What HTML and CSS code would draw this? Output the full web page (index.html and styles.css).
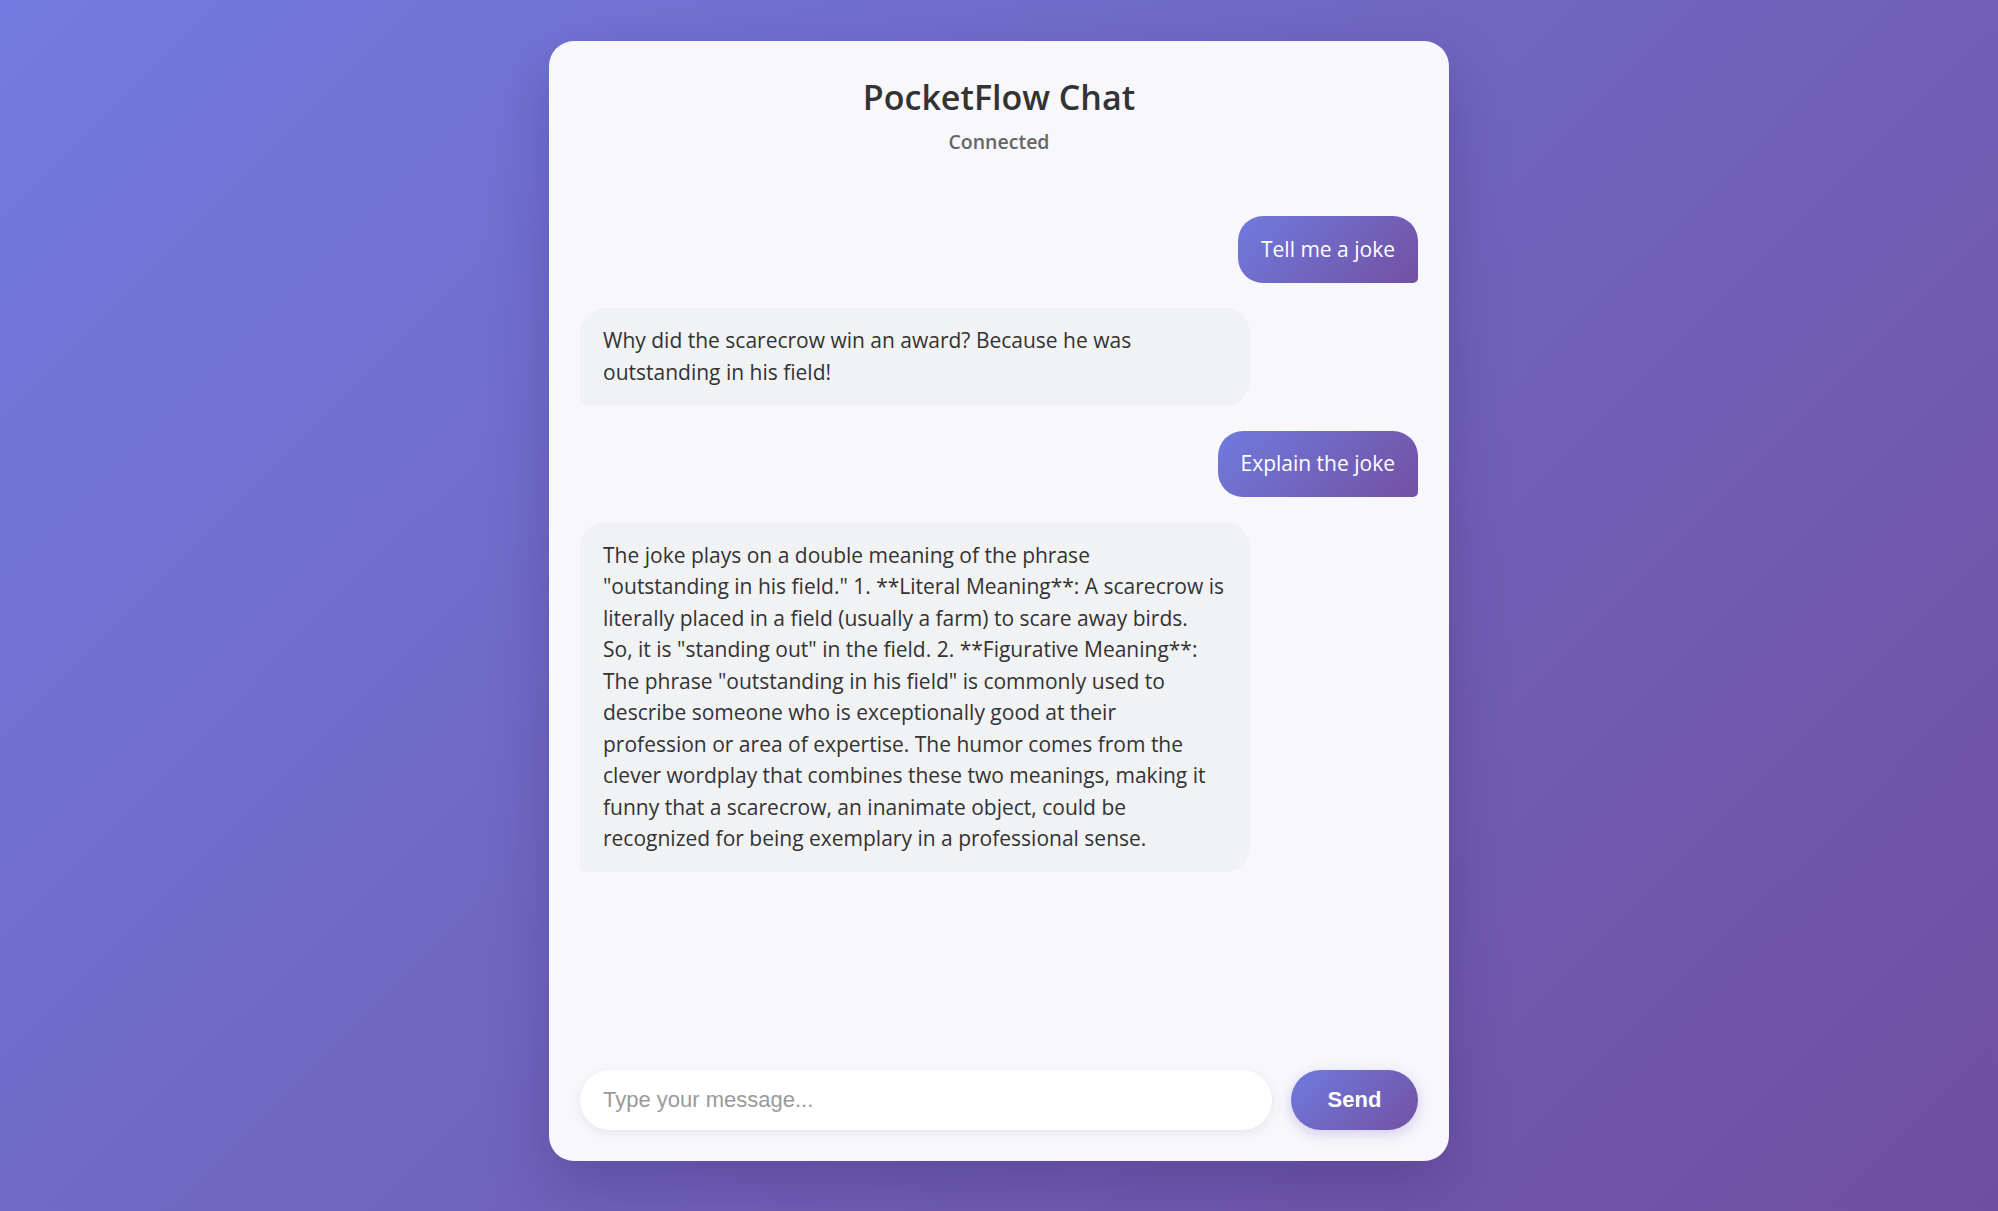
FILE: index.html
```html
<!DOCTYPE html>
<html lang="en">
<head>
<meta charset="utf-8">
<title>PocketFlow Chat</title>
<link rel="stylesheet" href="styles.css">
</head>
<body>
<div class="chat-card">
  <header class="chat-header">
    <h1 class="chat-title">PocketFlow Chat</h1>
    <div class="chat-status">Connected</div>
  </header>
  <div class="messages">
    <div class="msg msg-user">Tell me a joke</div>
    <div class="msg msg-bot">Why did the scarecrow win an award? Because he was outstanding in his field!</div>
    <div class="msg msg-user">Explain the joke</div>
    <div class="msg msg-bot">The joke plays on a double meaning of the phrase<br>"outstanding in his field." 1. **Literal Meaning**: A scarecrow is literally placed in a field (usually a farm) to scare away birds.<br>So, it is "standing out" in the field. 2. **Figurative Meaning**: The phrase "outstanding in his field" is commonly used to describe someone who is exceptionally good at their<br>profession or area of expertise. The humor comes from the clever wordplay that combines these two meanings, making it funny that a scarecrow, an inanimate object, could be recognized for being exemplary in a professional sense.</div>
  </div>
  <form class="composer" onsubmit="return false;">
    <input class="composer-input" type="text" placeholder="Type your message...">
    <button class="composer-send" type="button">Send</button>
  </form>
</div>
</body>
</html>
```

FILE: styles.css
```css
* { box-sizing: border-box; }

html, body {
  margin: 0;
  height: 100%;
}

body {
  background: linear-gradient(135deg, #727bdf 0%, #6f4e9f 100%);
  font-family: "Open Sans", "Noto Sans", sans-serif;
  display: flex;
  justify-content: center;
  padding-top: 41px;
  overflow: hidden;
}

.chat-card {
  width: 900px;
  height: 1120px;
  background: #f8f7fc;
  border-radius: 25px;
  box-shadow: 0 25px 60px rgba(40, 20, 90, 0.25);
  padding: 31px;
  display: flex;
  flex-direction: column;
}

.chat-header {
  text-align: center;
  padding-top: 3px;
}

.chat-title {
  margin: 0;
  font-size: 34px;
  line-height: 44px;
  font-weight: 600;
  color: #333333;
}

.chat-status {
  margin-top: 11px;
  font-size: 19.5px;
  line-height: 24px;
  font-weight: 600;
  color: #666666;
}

.messages {
  flex: 1;
  display: flex;
  flex-direction: column;
  gap: 25px;
  padding-top: 62px;
}

.msg {
  max-width: 80%;
  padding: 17.5px 23px;
  font-size: 21px;
  line-height: 31.5px;
  border-radius: 25px;
}

.msg-user {
  align-self: flex-end;
  color: #ffffff;
  background: linear-gradient(135deg, #6f7bde 0%, #7350a2 100%);
  border-bottom-right-radius: 5px;
}

.msg-bot {
  align-self: flex-start;
  width: 80%;
  color: #333333;
  background: #f1f2f4;
  border-bottom-left-radius: 6px;
}

.composer {
  display: flex;
  gap: 19px;
  margin: 0;
}

.composer-input {
  flex: 1;
  height: 60px;
  border: none;
  outline: none;
  border-radius: 30px;
  background: #ffffff;
  padding: 0 23px;
  font-family: "Liberation Sans", Arial, sans-serif;
  font-size: 22px;
  color: #333333;
  box-shadow: 0 3px 12px rgba(0, 0, 0, 0.08);
}

.composer-input::placeholder {
  color: #9a9a9a;
}

.composer-send {
  width: 127px;
  height: 60px;
  border: none;
  border-radius: 30px;
  background: linear-gradient(135deg, #6f7bde 0%, #7350a2 100%);
  color: #ffffff;
  font-family: "Liberation Sans", Arial, sans-serif;
  font-size: 22px;
  font-weight: 700;
  box-shadow: 0 4px 14px rgba(102, 80, 180, 0.25);
}
```
